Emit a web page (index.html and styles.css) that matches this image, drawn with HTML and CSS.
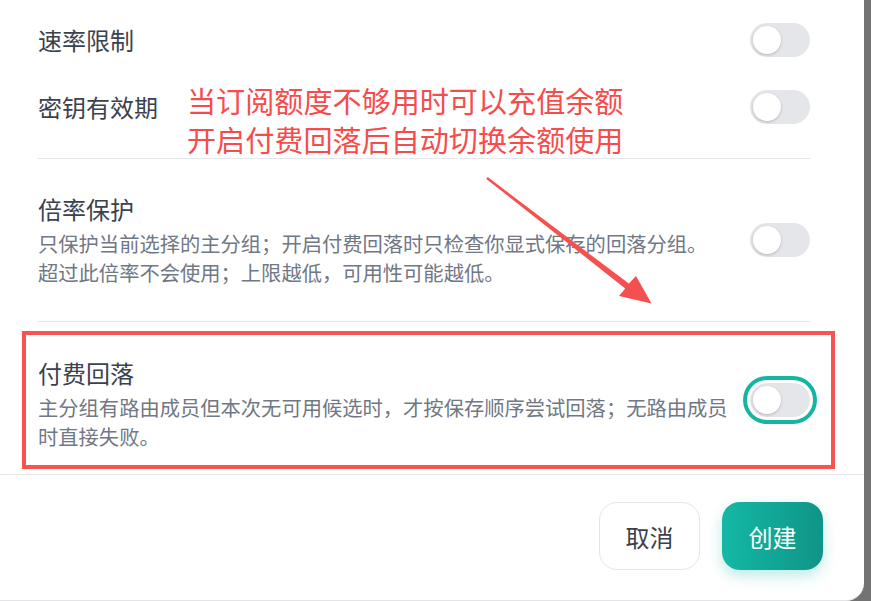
FILE: index.html
```html
<!DOCTYPE html>
<html lang="zh-CN">
<head>
<meta charset="utf-8">
<title>创建</title>
<link rel="stylesheet" href="styles.css">
</head>
<body>
<div class="modal">
  <div class="content">
    <section class="group">
      <div class="row row-simple">
        <div class="title">速率限制</div>
        <span class="toggle"></span>
      </div>
      <div class="row row-simple row-gap">
        <div class="title">密钥有效期</div>
        <span class="toggle"></span>
      </div>
    </section>
    <section class="group group-b">
      <div class="row">
        <div class="text">
          <div class="title">倍率保护</div>
          <div class="desc">只保护当前选择的主分组；开启付费回落时只检查你显式保存的回落分组。<br>超过此倍率不会使用；上限越低，可用性可能越低。</div>
        </div>
        <span class="toggle"></span>
      </div>
    </section>
    <section class="group group-c">
      <div class="row">
        <div class="text">
          <div class="title">付费回落</div>
          <div class="desc">主分组有路由成员但本次无可用候选时，才按保存顺序尝试回落；无路由成员<br>时直接失败。</div>
        </div>
        <span class="toggle toggle-focus"></span>
      </div>
    </section>
  </div>
  <div class="footer">
    <button class="btn btn-cancel">取消</button>
    <button class="btn btn-primary">创建</button>
  </div>

  <div class="note">当订阅额度不够用时可以充值余额<br>开启付费回落后自动切换余额使用</div>
  <svg class="arrow" width="871" height="601" viewBox="0 0 871 601">
    <polygon points="486.3,178.9 625.2,288.4 619,296 651.5,303.5 636,276 628.8,283.6 487.7,177.1" fill="#f5504f"/>
  </svg>
  <div class="highlight"></div>
</div>
</body>
</html>
```
FILE: styles.css
```css
* { box-sizing: border-box; }
html, body {
  margin: 0;
  padding: 0;
  height: 601px;
  overflow: hidden;
  background: #737373;
  font-family: "Noto Sans CJK SC", "Noto Sans", sans-serif;
}
.modal {
  position: relative;
  width: 864px;
  height: 601px;
  background: #ffffff;
  border-bottom: 1px solid #e3e4e8;
  border-bottom-right-radius: 18px;
  display: flex;
  flex-direction: column;
}
.content {
  padding: 0 54px 0 38px;
}
.group {
  padding: 23px 0 34px;
  border-bottom: 1px solid #e6e7eb;
}
.group-b {
  padding: 34px 0 34px;
}
.group-c {
  padding: 35px 0 23px;
  border-bottom: none;
}
.row {
  display: flex;
  align-items: center;
  justify-content: space-between;
}
.row-simple { height: 34px; }
.row-gap { margin-top: 33px; }
.title {
  font-size: 24px;
  line-height: 32px;
  color: #3a4250;
}
.desc {
  margin-top: 4px;
  font-size: 20.3px;
  line-height: 29px;
  color: #707785;
  white-space: nowrap;
}
.toggle {
  position: relative;
  flex: none;
  width: 60px;
  height: 34px;
  border-radius: 17px;
  background: #e5e6ea;
}
.toggle::after {
  content: "";
  position: absolute;
  left: 3px;
  top: 3px;
  width: 28px;
  height: 28px;
  border-radius: 50%;
  background: #ffffff;
  box-shadow: 0 1px 3px rgba(0, 0, 0, 0.22);
}
.toggle-focus {
  margin-bottom: 8px;
  box-shadow: 0 0 0 3px #ffffff, 0 0 0 7px #16b5a1;
}
.footer {
  border-top: 1px solid #e6e7eb;
  display: flex;
  justify-content: flex-end;
  gap: 22px;
  padding: 27px 41px 28px;
}
.btn {
  width: 101px;
  height: 68px;
  border-radius: 18px;
  font-family: "Noto Sans CJK SC", "Noto Sans", sans-serif;
  font-size: 24px;
  cursor: pointer;
}
.btn-cancel {
  background: #ffffff;
  border: 1px solid #e5e6ea;
  color: #3a4250;
}
.btn-primary {
  border: none;
  color: #ffffff;
  background: linear-gradient(90deg, #14b8a6, #0f9587);
  box-shadow: 0 6px 14px rgba(20, 184, 166, 0.28);
}
.note {
  position: absolute;
  left: 187px;
  top: 81px;
  font-size: 29.1px;
  line-height: 39px;
  color: #f64c4c;
  white-space: nowrap;
}
.arrow {
  position: absolute;
  left: 0;
  top: 0;
  pointer-events: none;
}
.highlight {
  position: absolute;
  left: 22px;
  top: 331px;
  width: 813px;
  height: 138px;
  border: 4.5px solid #f75350;
  pointer-events: none;
}
```
